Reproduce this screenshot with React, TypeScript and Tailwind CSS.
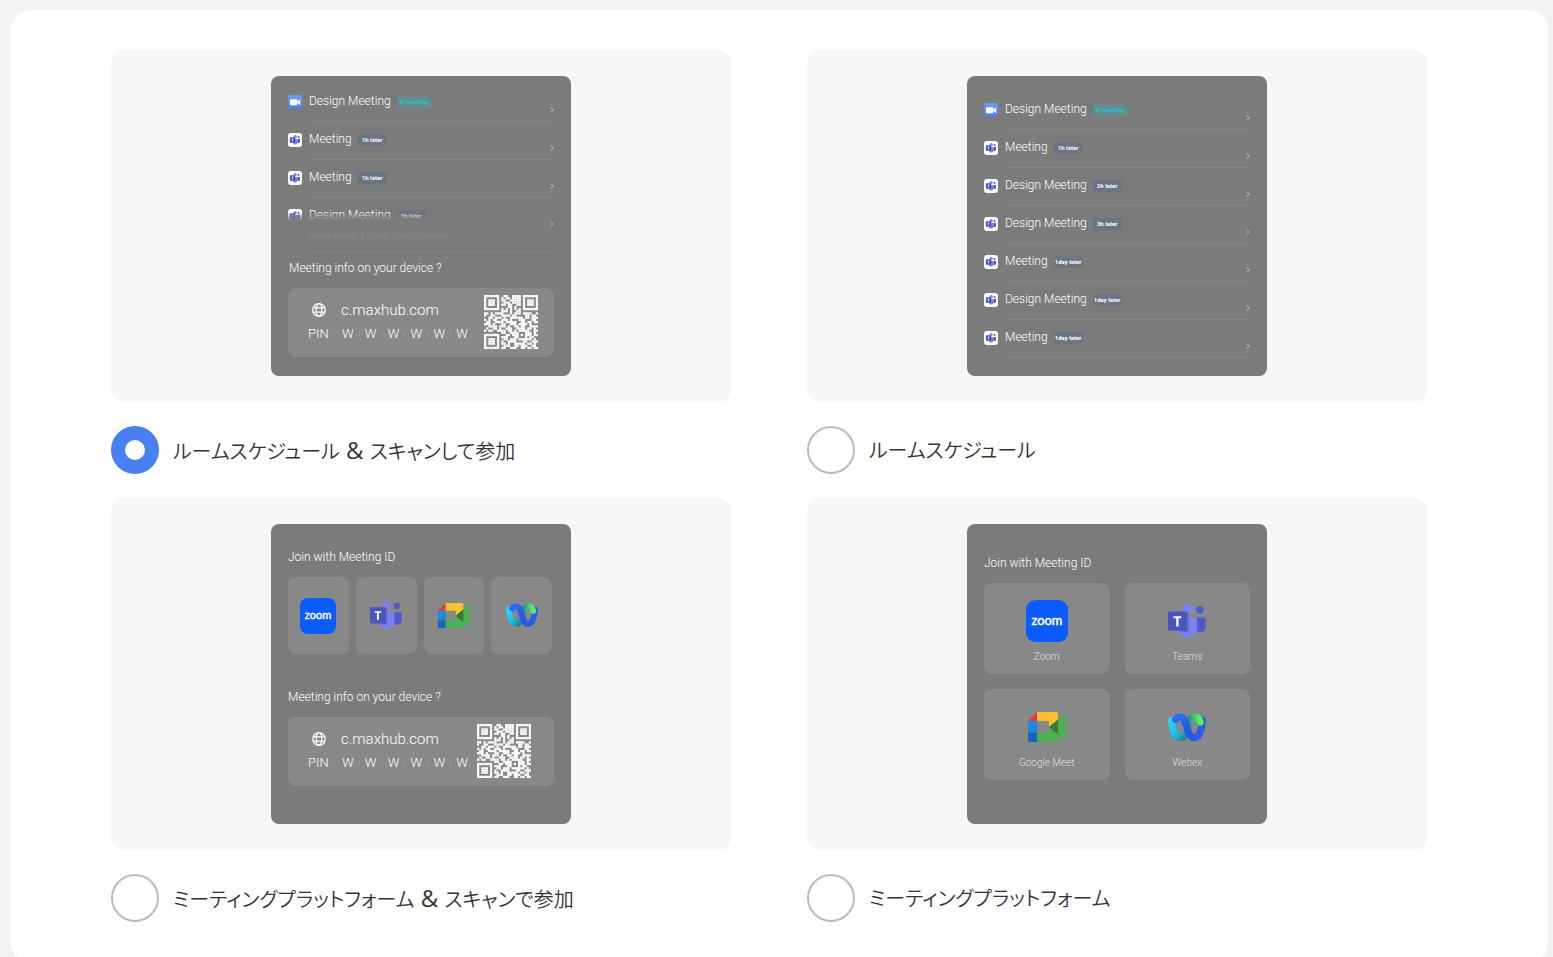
import React, { useState } from "react";

type Meeting = {
  title: string;
  tag: string;
  live?: boolean;
};

const scheduleMeetings: Meeting[] = [
  { title: "Design Meeting", tag: "In meeting", live: true },
  { title: "Meeting", tag: "1h later" },
  { title: "Design Meeting", tag: "2h later" },
  { title: "Design Meeting", tag: "3h later" },
  { title: "Meeting", tag: "1day later" },
  { title: "Design Meeting", tag: "1day later" },
  { title: "Meeting", tag: "1day later" },
];

const shortMeetings: Meeting[] = [
  { title: "Design Meeting", tag: "In meeting", live: true },
  { title: "Meeting", tag: "1h later" },
  { title: "Meeting", tag: "1h later" },
];

const qrRows = [
  "#######..##..####.#######",
  "#.....#.#.##.####.#.....#",
  "#.###.#.##..#####.#.###.#",
  "#.###.#..###.####.#.###.#",
  "#.###.#.##.##..##.#.###.#",
  "#.....#....##.#...#.....#",
  "#######.#.#.#.#.#.#######",
  "........###.#..##........",
  "##.#.####...#.###.####..#",
  "#..##...####.##....##.##.",
  "..##.###.#..######.##.###",
  "#.#.##..###.#...###...##.",
  ".##..####.#####..##.##.##",
  "###.#...##..###.####.#...",
  "..####.###.#..##.##..####",
  ".#..##.#..###..####.##.#.",
  "#.##..####.##.#.#####..##",
  "........##..####...###.#.",
  "#######...##.###.#.###.##",
  "#.....#.###...##...#.##..",
  "#.###.#..##.###.######.#.",
  "#.###.#.#..####...##..###",
  "#.###.#.##.#..#####.##.#.",
  "#.....#..###..##.###..##.",
  "#######.##..###..##.##.##",
];

const QrCode: React.FC = () => (
  <svg viewBox="0 0 25 25" className="size-[54px] shrink-0" fill="white">
    {qrRows.map((row, y) =>
      row.split("").map((cell, x) =>
        cell === "#" ? <rect key={`${x}-${y}`} x={x} y={y} width="1.050" height="1.050" /> : null
      )
    )}
  </svg>
);

const GlobeIcon: React.FC = () => (
  <svg viewBox="0 0 14 14" className="size-3.5" fill="none" stroke="white" strokeWidth="1.2">
    <circle cx="7" cy="7" r="6.3" />
    <ellipse cx="7" cy="7" rx="2.8" ry="6.3" />
    <path d="M1.2 4.8h11.6M1.2 9.2h11.6" />
  </svg>
);

const ZoomCameraIcon: React.FC = () => (
  <svg viewBox="0 0 14 14" className="size-3.5 shrink-0">
    <defs>
      <linearGradient id="camera" x1="0" y1="0" x2="0" y2="1">
        <stop offset="0" stopColor="#6a9bf7" />
        <stop offset="1" stopColor="#4a82ee" />
      </linearGradient>
    </defs>
    <rect width="14" height="14" rx="3" fill="url(#camera)" />
    <rect x="2" y="4.2" width="7.5" height="6" rx="1.2" fill="white" />
    <path d="M9.6 6.3 12.200 4.300v5.8L9.6 8.200z" fill="white" />
  </svg>
);

const TeamsShape: React.FC = () => (
  <>
    <circle cx="379.500" cy="245" r="9.500" fill="#5059c9" />
    <path d="M368 264h22a4 4 0 0 1 4 4v20a14 14 0 0 1-24 10z" fill="#5059c9" />
    <circle cx="348.500" cy="242" r="14" fill="#7b83eb" />
    <path d="M330 264h38a4 4 0 0 1 4 4v26a24 24 0 0 1-47 5z" fill="#7b83eb" />
    <path d="M334 249h12a5 5 0 0 1 5 5v44a4 4 0 0 1-4 4h-20z" fill="#4a52b5" opacity=".4" />
    <rect x="298" y="249" width="49" height="49" rx="4" fill="#4b53bc" />
    <path d="M312 261h20v5h-7v21h-6v-21h-7z" fill="white" />
  </>
);

const TeamsIcon: React.FC = () => (
  <svg viewBox="0 0 14 14" className="size-3.5 shrink-0">
    <rect width="14" height="14" rx="3" fill="white" />
    <svg x="1.500" y="2" width="11" height="10" viewBox="298 227 97 93">
      <TeamsShape />
    </svg>
  </svg>
);

const ZoomLogo: React.FC<{ className: string }> = ({ className }) => (
  <svg viewBox="0 0 36 36" className={className}>
    <rect width="36" height="36" rx="8" fill="#0b5cff" />
    <text
      x="18"
      y="21"
      textAnchor="middle"
      fill="white"
      stroke="white"
      strokeWidth=".4"
      fontSize="11"
      fontFamily="Lato, sans-serif"
      fontWeight="400"
    >
      zoom
    </text>
  </svg>
);

const TeamsLogo: React.FC<{ className: string }> = ({ className }) => (
  <svg viewBox="298 227 97 93" className={className}>
    <TeamsShape />
  </svg>
);

const MeetLogo: React.FC<{ className: string }> = ({ className }) => (
  <svg viewBox="0 0 96 76" className={className}>
    <path d="M0 23 23 0v23z" fill="#e53935" />
    <path d="M0 23h23v29H0z" fill="#1e88e5" />
    <path d="M0 52h23v24H5a5 5 0 0 1-5-5z" fill="#1565c0" />
    <path d="M23 0h48a5 5 0 0 1 5 5v19L53 38V23H23z" fill="#fbc02d" />
    <path d="M23 52h30V38l23 18v15a5 5 0 0 1-5 5H23z" fill="#4caf50" />
    <path d="M76 19 92 5c2-2 4-1 4 2v62c0 3-2 4-4 2L76 57z" fill="#4caf50" />
    <path d="M53 38 76 19v38z" fill="#2e7d32" />
  </svg>
);

const WebexLogo: React.FC<{ className: string }> = ({ className }) => (
  <svg viewBox="0 0 98 74" className={className} fill="none" strokeWidth="18" strokeLinecap="round">
    <defs>
      <linearGradient id="webexCyan" x1="0" y1="0" x2="1" y2="1">
        <stop offset="0" stopColor="#24d6f5" />
        <stop offset=".5" stopColor="#1cc0ea" />
        <stop offset=".9" stopColor="#247f9c" />
      </linearGradient>
      <linearGradient id="webexGreen" x1="0" y1="0" x2="1" y2="0">
        <stop offset="0" stopColor="#267a8c" />
        <stop offset=".5" stopColor="#3cc27e" />
        <stop offset="1" stopColor="#5df05a" />
      </linearGradient>
      <linearGradient id="webexBlue" x1="0" y1="0" x2="1" y2="1">
        <stop offset="0" stopColor="#2f6bff" />
        <stop offset=".6" stopColor="#2456e0" />
        <stop offset="1" stopColor="#2a5fe8" />
      </linearGradient>
    </defs>
    <path d="M9 19C11 42 17 64 31 64C44 64 48 48 52 34" stroke="url(#webexCyan)" />
    <path d="M89 19C87 42 81 64 67 64" stroke="#2a5fe8" />
    <path d="M50 42C53 24 58 10 68 10C76 10 81 15 83 24" stroke="url(#webexGreen)" />
    <path d="M19 17C22 12 26 10 31 10C50 10 47 64 67 64C72 64 76 61 79 56" stroke="url(#webexBlue)" />
  </svg>
);

const Chevron: React.FC = () => (
  <svg viewBox="0 0 4 6" className="mt-3 h-1.5 w-1 shrink-0" fill="none" stroke="#b5b5b5" strokeWidth="1">
    <path d="M.7.5 3.200 3 .7 5.500" />
  </svg>
);

const Tag: React.FC<{ meeting: Meeting }> = ({ meeting }) => (
  <span
    className={`mt-px flex h-3 items-center justify-center rounded-xs rounded-br-sm text-[6px] leading-none font-bold whitespace-nowrap ${
      meeting.live ? "w-[35px] bg-[#648b8d] text-[#27c3cb]" : "w-[29px] bg-[#6b7482] text-white"
    }`}
  >
    {meeting.tag}
  </span>
);

const MeetingRow: React.FC<{ meeting: Meeting }> = ({ meeting }) => (
  <li className="flex h-[38px] gap-[7px] pt-[11px]">
    {meeting.live ? <ZoomCameraIcon /> : <TeamsIcon />}
    <div className="flex grow items-start justify-between border-b border-[#848484]">
      <div className="flex items-start gap-1.5">
        <span className="text-xs leading-3">{meeting.title}</span>
        <Tag meeting={meeting} />
      </div>
      <Chevron />
    </div>
  </li>
);

const FadedMeetingRow: React.FC = () => (
  <li className="relative flex h-[55px] gap-[7px] pt-[11px]">
    <TeamsIcon />
    <div className="flex grow items-start justify-between border-b border-[#828282]">
      <div>
        <div className="flex items-start gap-1.5">
          <span className="text-xs leading-3">Design Meeting</span>
          <Tag meeting={{ title: "Design Meeting", tag: "1h later" }} />
        </div>
        <div className="relative z-10 mt-2 flex items-center gap-1.5 text-[8px] leading-3 text-[#8e8e8e]">
          <span>Zhang Spring</span>
          <span className="h-2 w-px bg-[#858585]"></span>
          <span>10:00-11:00 Fri, Dec 03</span>
        </div>
      </div>
      <span className="relative z-10 flex">
        <Chevron />
      </span>
    </div>
    <div className="absolute inset-x-0 top-3 bottom-px bg-linear-to-b from-transparent from-5% to-[#7b7b7b] to-25%"></div>
  </li>
);

const DeviceInfo: React.FC<{ compact?: boolean }> = ({ compact }) => (
  <div
    className={`flex items-start justify-between rounded-lg bg-[#888888] pt-[7px] pb-2 pl-5 ${
      compact ? "pr-[23px]" : "pr-4"
    }`}
  >
    <div className="pt-[3px]">
      <div className="flex h-6 items-center">
        <span className="flex w-[33px] pl-1">
          <GlobeIcon />
        </span>
        <span className="text-[15px] leading-5">c.maxhub.com</span>
      </div>
      <div className="flex h-6 items-center text-[13px] leading-5">
        <span className="w-[34px]">PIN</span>
        <div className="flex w-[126px] items-center justify-between">
          {[0, 1, 2, 3, 4, 5].map((digit) => (
            <React.Fragment key={digit}>
              {digit > 0 && <span className="h-1.5 w-px bg-[#999999]"></span>}
              <span>W</span>
            </React.Fragment>
          ))}
        </div>
      </div>
    </div>
    <QrCode />
  </div>
);

const ScheduleScanPreview: React.FC = () => (
  <div className="pt-2">
    <ul>
      {shortMeetings.map((meeting, i) => (
        <MeetingRow key={i} meeting={meeting} />
      ))}
      <FadedMeetingRow />
    </ul>
    <p className="mt-[7px] mb-3 pl-px text-xs">Meeting info on your device ?</p>
    <DeviceInfo />
  </div>
);

const SchedulePreview: React.FC = () => (
  <ul className="pt-4">
    {scheduleMeetings.map((meeting, i) => (
      <MeetingRow key={i} meeting={meeting} />
    ))}
  </ul>
);

const PlatformScanPreview: React.FC = () => (
  <div className="pt-[25px]">
    <p className="text-xs">Join with Meeting ID</p>
    <div className="mt-3 mr-0.5 grid grid-cols-4 gap-[7px]">
      <div className="flex h-[77px] items-center justify-center rounded-lg bg-[#888888]">
        <ZoomLogo className="size-9" />
      </div>
      <div className="flex h-[77px] items-center justify-center rounded-lg bg-[#888888]">
        <TeamsLogo className="w-8" />
      </div>
      <div className="flex h-[77px] items-center justify-center rounded-lg bg-[#888888]">
        <MeetLogo className="w-8" />
      </div>
      <div className="flex h-[77px] items-center justify-center rounded-lg bg-[#888888]">
        <WebexLogo className="w-8" />
      </div>
    </div>
    <p className="mt-[35px] mb-3 text-xs">Meeting info on your device ?</p>
    <DeviceInfo compact />
  </div>
);

const PlatformTile: React.FC<{ name: string; children: React.ReactNode }> = ({ name, children }) => (
  <div className="flex h-[91px] flex-col items-center rounded-lg bg-[#888888] pt-[17px] text-[10px] text-[#e0e0e0]">
    <div className="flex h-[42px] items-center">{children}</div>
    <span className="mt-2 leading-3.5">{name}</span>
  </div>
);

const PlatformPreview: React.FC = () => (
  <div className="pt-[31px]">
    <p className="text-xs">Join with Meeting ID</p>
    <div className="mt-3 grid grid-cols-2 gap-[15px]">
      <PlatformTile name="Zoom">
        <ZoomLogo className="size-[42px]" />
      </PlatformTile>
      <PlatformTile name="Teams">
        <TeamsLogo className="w-[38px]" />
      </PlatformTile>
      <PlatformTile name="Google Meet">
        <MeetLogo className="w-[38px]" />
      </PlatformTile>
      <PlatformTile name="Webex">
        <WebexLogo className="w-[38px]" />
      </PlatformTile>
    </div>
  </div>
);

const options = [
  { id: "schedule-scan", name: "ルームスケジュール", extra: "スキャンして参加", Preview: ScheduleScanPreview },
  { id: "schedule", name: "ルームスケジュール", Preview: SchedulePreview },
  { id: "platform-scan", name: "ミーティングプラットフォーム", extra: "スキャンで参加", Preview: PlatformScanPreview },
  { id: "platform", name: "ミーティングプラットフォーム", Preview: PlatformPreview },
];

const App: React.FC = () => {
  const [selected, setSelected] = useState("schedule-scan");

  return (
    <div className="h-screen overflow-hidden bg-[#f3f3f3] pt-2.5 pr-[5px] pl-[11px]">
      <main className="grid grid-cols-2 gap-x-[76px] gap-y-6 rounded-[20px] bg-white pt-10 pr-[121px] pb-10 pl-[100px]">
        {options.map(({ id, name, extra, Preview }) => (
          <section key={id}>
            <div className="flex h-[352px] items-center justify-center rounded-xl bg-[#f7f7f7]">
              <div className="h-[300px] w-[300px] overflow-hidden rounded-lg bg-[#7b7b7b] px-[17px] font-['Roboto',sans-serif] font-[350] text-white">
                <Preview />
              </div>
            </div>
            <div className="mt-6 flex h-12 items-center gap-3.5">
              <input
                type="radio"
                id={id}
                name="layout"
                checked={selected === id}
                onChange={() => setSelected(id)}
                className="size-12 shrink-0 appearance-none rounded-full border-2 border-[#bbbbbb] bg-white checked:border-[14px] checked:border-[#4880f2]"
              />
              <label
                htmlFor={id}
                className="font-['Noto_Sans_CJK_JP',sans-serif] text-xl leading-8 font-[350] whitespace-nowrap text-[#333333] [font-feature-settings:'palt']"
              >
                {name}
                {extra && (
                  <>
                    <span className="font-['Open_Sans',sans-serif] text-2xl leading-8 font-normal"> &amp; </span>
                    {extra}
                  </>
                )}
              </label>
            </div>
          </section>
        ))}
      </main>
    </div>
  );
};

export default App;
